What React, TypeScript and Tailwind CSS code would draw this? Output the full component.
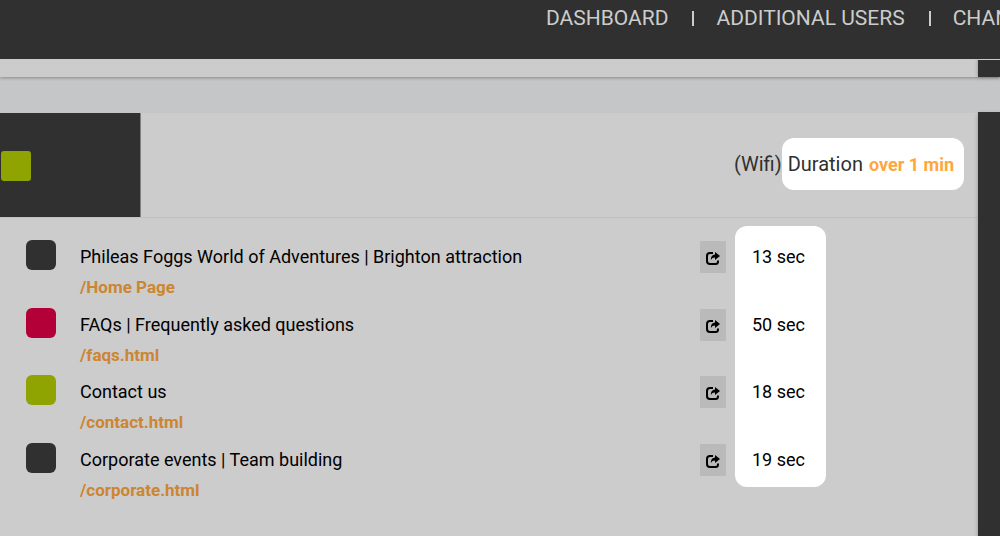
import React from "react";

type Visit = { title: string; path: string; duration: string; color: string };

const visits: Visit[] = [
  { title: "Phileas Foggs World of Adventures | Brighton attraction", path: "/Home Page", duration: "13 sec", color: "bg-[#303030]" },
  { title: "FAQs | Frequently asked questions", path: "/faqs.html", duration: "50 sec", color: "bg-[#b30038]" },
  { title: "Contact us", path: "/contact.html", duration: "18 sec", color: "bg-[#8fa400]" },
  { title: "Corporate events | Team building", path: "/corporate.html", duration: "19 sec", color: "bg-[#303030]" },
];

const navItems = ["DASHBOARD", "ADDITIONAL USERS", "CHAN"];

function ShareIcon() {
  return (
    <svg viewBox="0 0 14 14" className="block size-[14px]" aria-hidden="true">
      <path d="M7 2H4Q1 2 1 5V10Q1 13 4 13H9.500Q12 13 12 10.500V9.500" fill="none" stroke="#000" strokeWidth="2" />
      <path d="M9 1L14 5L9 9V6.600Q6.300 6.500 4.800 9Q4.800 3.600 9 3.400Z" fill="#000" />
    </svg>
  );
}

function Header() {
  return (
    <header className="relative h-[59px] overflow-hidden bg-[#303030] pl-[546px]">
      <nav className="pt-1">
        <ul className="flex items-center text-[21px] leading-7 whitespace-nowrap text-[#cccccc]">
          {navItems.map((item, i) => (
            <li key={item} className="flex items-center">
              {i > 0 && <span className="mr-[22px] ml-6 h-[15px] w-[2px] bg-[#cccccc]" />}
              <a href="#">{item}</a>
            </li>
          ))}
        </ul>
      </nav>
    </header>
  );
}

function VisitTable() {
  return (
    <div className="relative pt-[18px]">
      <div className="absolute top-2 left-[735px] h-[261px] w-[91px] rounded-[12px] bg-white" />
      <table className="relative h-[270px] w-full table-fixed border-collapse text-[18px]">
        <colgroup>
          <col className="w-[80px]" />
          <col className="w-[620px]" />
          <col className="w-[35px]" />
          <col />
        </colgroup>
        <tbody>
          {visits.map((v) => (
            <tr key={v.path} className="align-top">
              <td className="pt-1 pl-[26px]">
                <span className={`block size-[30px] rounded-[6px] ${v.color}`} />
              </td>
              <td className="pt-[6px]">
                <div className="leading-[30px] text-black">{v.title}</div>
                <a href="#" className="block text-[17px] leading-[30px] font-bold text-[#cc8530]">
                  {v.path}
                </a>
              </td>
              <td className="pt-[5px]">
                <button aria-label={`Open ${v.path}`} className="flex h-8 w-[26px] items-center justify-center bg-[#bababa] pt-[2px]">
                  <ShareIcon />
                </button>
              </td>
              <td className="pt-[6px] pl-[17px] leading-[30px] text-black">{v.duration}</td>
            </tr>
          ))}
        </tbody>
      </table>
    </div>
  );
}

export default function App() {
  return (
    <div className="flex min-h-screen flex-col overflow-hidden bg-[#c5c6c8] font-[Roboto,sans-serif]">
      <Header />
      <div className="flex h-[18px] shadow-[0_1px_3px_rgba(0,0,0,0.3)]">
        <div className="flex-1 bg-[#cccccc]" />
        <div className="w-[22px] border-t border-[#cccccc] bg-[#303030] shadow-[0_0_4px_rgba(0,0,0,0.3)]" />
      </div>
      <div className="mt-[35px] flex flex-1">
        <main className="mt-px min-w-0 flex-1 bg-[#cccccc]">
          <section className="flex h-[105px] items-stretch border-b border-[#c0c0c0]">
            <div className="flex w-[141px] items-center border-r border-[#808080] bg-[#303030] pt-[2px] pl-px">
              <span className="size-[30px] rounded-[3px] bg-[#8fa400]" />
            </div>
            <div className="flex flex-1 items-center justify-end pr-[14px] pb-[2px] text-[20px] text-[#303030]">
              <span>(Wifi)</span>
              <p className="flex h-[52px] items-center gap-[6px] rounded-[12px] bg-white pr-[10px] pl-[6px]">
                Duration <strong className="text-[18px] font-bold text-[#ffa63c]">over 1 min</strong>
              </p>
            </div>
          </section>
          <VisitTable />
        </main>
        <aside className="w-[22px] bg-[#303030] shadow-[0_2px_4px_rgba(0,0,0,0.3)]" />
      </div>
    </div>
  );
}
